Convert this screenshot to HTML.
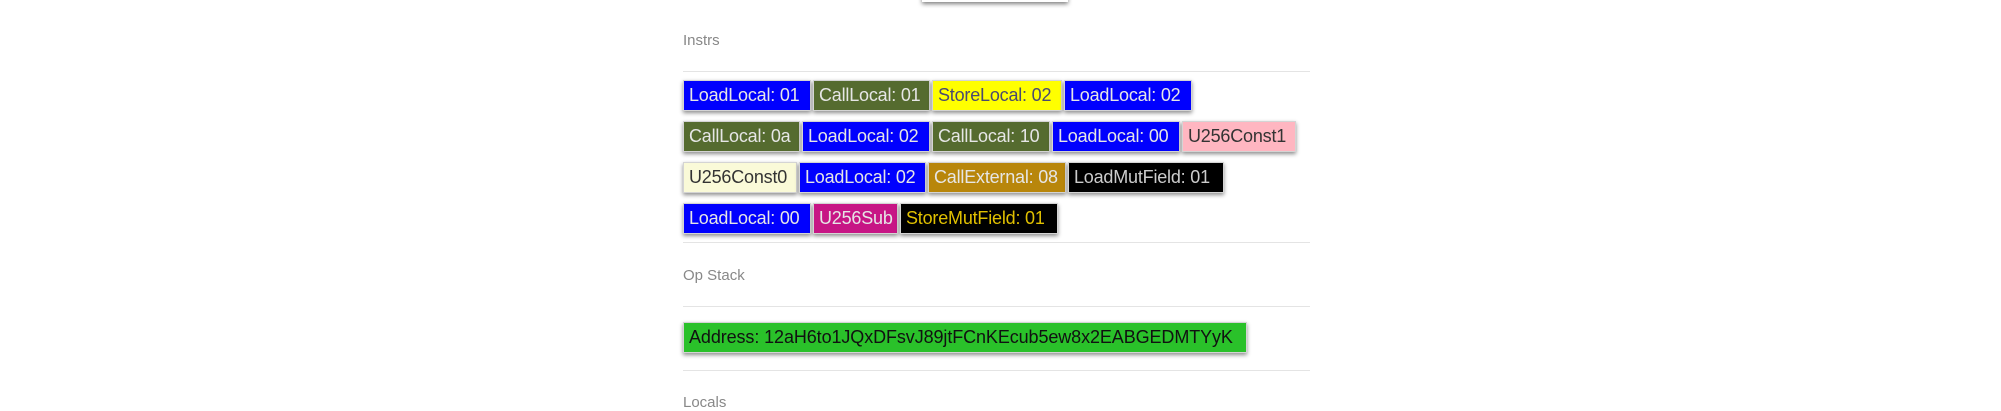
<!DOCTYPE html>
<html><head><meta charset="utf-8"><style>
html,body{margin:0;padding:0;background:#fff;width:2001px;height:400px;overflow:hidden;font-family:"Liberation Sans",sans-serif}
.c{position:absolute;height:31px;box-sizing:border-box;border:1.5px solid #d4d4d4;box-shadow:0 2px 4px rgba(0,0,0,.45);font-size:18px;line-height:28px;padding-left:5px;white-space:nowrap;overflow:hidden;color:#e6e6e6;letter-spacing:-0.2px}
.lbl{position:absolute;left:683px;font-size:15px;color:#888}
.hr{position:absolute;left:683px;width:627px;height:1px;background:#e4e4e4}
.b{background:#0000fe}.o{background:#556b2f}.y{background:#ffff00;color:#4a4a70}.g{background:#b8860b}.k{background:#000}.m{background:#c71585}.p{background:#ffb6c1;color:#333}.ly{background:#fafad8;color:#333}
</style></head><body>
<div style="position:absolute;left:922px;top:-6px;width:146px;height:8px;background:#fff;box-shadow:0 2px 4px rgba(0,0,0,.5)"></div>
<div class="lbl" style="top:32px">Instrs</div>
<div class="hr" style="top:71px"></div>
<div class="c b" style="left:683px;top:80px;width:128px">LoadLocal: 01</div>
<div class="c o" style="left:813px;top:80px;width:117px">CallLocal: 01</div>
<div class="c y" style="left:932px;top:80px;width:130px">StoreLocal: 02</div>
<div class="c b" style="left:1064px;top:80px;width:128px">LoadLocal: 02</div>

<div class="c o" style="left:683px;top:121px;width:117px">CallLocal: 0a</div>
<div class="c b" style="left:802px;top:121px;width:128px">LoadLocal: 02</div>
<div class="c o" style="left:932px;top:121px;width:118px">CallLocal: 10</div>
<div class="c b" style="left:1052px;top:121px;width:128px">LoadLocal: 00</div>
<div class="c p" style="left:1182px;top:121px;width:114px">U256Const1</div>

<div class="c ly" style="left:683px;top:162px;width:114px">U256Const0</div>
<div class="c b" style="left:799px;top:162px;width:127px">LoadLocal: 02</div>
<div class="c g" style="left:928px;top:162px;width:138px">CallExternal: 08</div>
<div class="c k" style="left:1068px;top:162px;width:156px;color:#ccc">LoadMutField: 01</div>

<div class="c b" style="left:683px;top:203px;width:128px">LoadLocal: 00</div>
<div class="c m" style="left:813px;top:203px;width:85px">U256Sub</div>
<div class="c k" style="left:900px;top:203px;width:158px;color:#e0c000">StoreMutField: 01</div>

<div class="hr" style="top:242px"></div>
<div class="lbl" style="top:267px">Op Stack</div>
<div class="hr" style="top:306px"></div>
<div class="c" style="left:683px;top:322px;width:564px;background:#2ac12a;color:#111;font-size:18px;letter-spacing:-0.1px">Address: 12aH6to1JQxDFsvJ89jtFCnKEcub5ew8x2EABGEDMTYyK</div>
<div class="hr" style="top:370px"></div>
<div class="lbl" style="top:394px">Locals</div>
</body></html>
